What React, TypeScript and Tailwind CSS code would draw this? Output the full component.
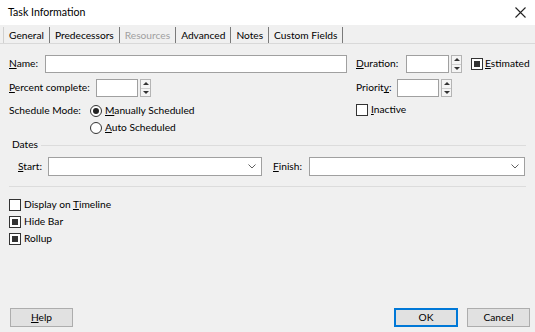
import React from "react";

const U = ({ c }: { c: string }) => <span className="underline underline-offset-[1px]">{c}</span>;

function Spinner() {
  return (
    <div className="ml-[2px] flex h-[18px] w-[11px] flex-col border border-[#b4b4b4] bg-[#f4f4f4]">
      <div className="flex flex-1 items-center justify-center border-b border-[#cfcfcf]">
        <div className="h-0 w-0 border-x-[3px] border-b-[3px] border-x-transparent border-b-[#333]" />
      </div>
      <div className="flex flex-1 items-center justify-center">
        <div className="h-0 w-0 border-x-[3px] border-t-[3px] border-x-transparent border-t-[#333]" />
      </div>
    </div>
  );
}

function Check({ on }: { on?: boolean }) {
  return (
    <div className="flex h-[12px] w-[12px] shrink-0 items-center justify-center border border-[#333] bg-white">
      {on && <div className="h-[6px] w-[6px] bg-[#333]" />}
    </div>
  );
}

function Radio({ on }: { on?: boolean }) {
  return (
    <div className="flex h-[12px] w-[12px] shrink-0 items-center justify-center rounded-full border border-[#333] bg-white">
      {on && <div className="h-[6px] w-[6px] rounded-full bg-[#222]" />}
    </div>
  );
}

function Combo({ w }: { w: string }) {
  return (
    <div className={`flex h-[19px] items-center justify-end border border-[#a0a0a0] bg-white pr-[5px] ${w}`}>
      <svg width="8" height="5" viewBox="0 0 8 5">
        <path d="M0.5 0.5 L4 4 L7.5 0.5" fill="none" stroke="#606060" strokeWidth="1" />
      </svg>
    </div>
  );
}

const Tab = ({ children, active, dim }: { children: React.ReactNode; active?: boolean; dim?: boolean }) => (
  <div
    className={`flex h-full items-center whitespace-nowrap border-r border-[#7a7a7a] px-[5px] pt-[1px] ${dim ? "text-[#a0a0a0]" : "text-black"} ${
      active ? "border-l border-l-[#d0d0d0] bg-[#f0f0f0]" : ""
    }`}
  >
    {children}
  </div>
);

export default function App() {
  return (
    <div
      className="flex h-[332px] w-[535px] flex-col whitespace-nowrap bg-[#f0f0f0] text-[10.2px] text-black"
      style={{ fontFamily: "Lato, 'Noto Sans', sans-serif" }}
    >
      <div className="flex h-[25px] shrink-0 items-center justify-between bg-white pl-[8px] pr-[9px]">
        <span className="text-[10.6px]">Task Information</span>
        <svg width="11" height="11" viewBox="0 0 11 11">
          <path d="M0.5 0.5 L10.5 10.5 M10.5 0.5 L0.5 10.5" stroke="#222" strokeWidth="1.1" />
        </svg>
      </div>
      <div className="mt-[2px] flex h-[17px] shrink-0 border-b border-[#d9d9d9] pl-[3px]">
        <Tab active>General</Tab>
        <Tab>Predecessors</Tab>
        <Tab dim>Resources</Tab>
        <Tab>Advanced</Tab>
        <Tab>Notes</Tab>
        <Tab>Custom Fields</Tab>
      </div>

      <div className="flex flex-1 flex-col px-[9px] pb-[5px]">
        <div className="mt-[11px] flex">
          <div className="flex w-[338px] flex-col">
            <div className="flex h-[18px] items-center">
              <span className="w-[36px]"><U c="N" />ame:</span>
              <div className="h-[18px] w-[302px] border border-[#a0a0a0] bg-white" />
            </div>
            <div className="mt-[6px] flex h-[18px] items-center">
              <span className="w-[87px]"><U c="P" />ercent complete:</span>
              <div className="h-[18px] w-[42px] border border-[#a0a0a0] bg-white" />
              <Spinner />
            </div>
            <div className="mt-[8px] flex h-[12px] items-center">
              <span className="w-[81px]">Schedule Mode:</span>
              <Radio on />
              <span className="ml-[3px]"><U c="M" />anually Scheduled</span>
            </div>
            <div className="mt-[5px] flex h-[12px] items-center pl-[81px]">
              <Radio />
              <span className="ml-[3px]"><U c="A" />uto Scheduled</span>
            </div>
          </div>
          <div className="ml-[9px] flex flex-col">
            <div className="flex h-[18px] items-center">
              <span className="w-[50px]"><U c="D" />uration:</span>
              <div className="h-[18px] w-[43px] border border-[#a0a0a0] bg-white" />
              <Spinner />
              <div className="ml-[9px]"><Check on /></div>
              <span className="ml-[2px]"><U c="E" />stimated</span>
            </div>
            <div className="mt-[6px] flex h-[18px] items-center">
              <span className="w-[41px]">Priorit<U c="y" />:</span>
              <div className="h-[18px] w-[42px] border border-[#a0a0a0] bg-white" />
              <Spinner />
            </div>
            <div className="mt-[7px] flex h-[12px] items-center">
              <Check />
              <span className="ml-[3px]"><U c="I" />nactive</span>
            </div>
          </div>
        </div>

        <div className="mt-[4px] flex h-[14px] items-center pl-[3px]">
          <span>Dates</span>
          <div className="ml-[3px] h-px flex-1 bg-[#dcdcdc]" />
        </div>
        <div className="mt-[5px] flex h-[19px] items-center pl-[9px]">
          <span className="w-[30px]"><U c="S" />tart:</span>
          <Combo w="w-[214px]" />
          <span className="ml-[11px] w-[36px]"><U c="F" />inish:</span>
          <Combo w="w-[216px]" />
        </div>
        <div className="mt-[10px] h-px bg-[#dcdcdc]" />

        <div className="mt-[12px] flex h-[12px] items-center">
          <Check />
          <span className="ml-[3px]">Display on <U c="T" />imeline</span>
        </div>
        <div className="mt-[5px] flex h-[12px] items-center">
          <Check on />
          <span className="ml-[3px]">Hide Bar</span>
        </div>
        <div className="mt-[5px] flex h-[12px] items-center">
          <Check on />
          <span className="ml-[3px]">Rollup</span>
        </div>

        <div className="-mr-[4px] mt-auto flex items-center">
          <button className="ml-[1px] h-[19px] w-[63px] border border-[#adadad] bg-[#e1e1e1]"><U c="H" />elp</button>
          <div className="flex-1" />
          <button className="h-[19px] w-[64px] border-2 border-[#0078d7] bg-[#e1e1e1]">OK</button>
          <button className="ml-[9px] h-[19px] w-[63px] border border-[#adadad] bg-[#e1e1e1]">Cancel</button>
        </div>
      </div>
    </div>
  );
}
